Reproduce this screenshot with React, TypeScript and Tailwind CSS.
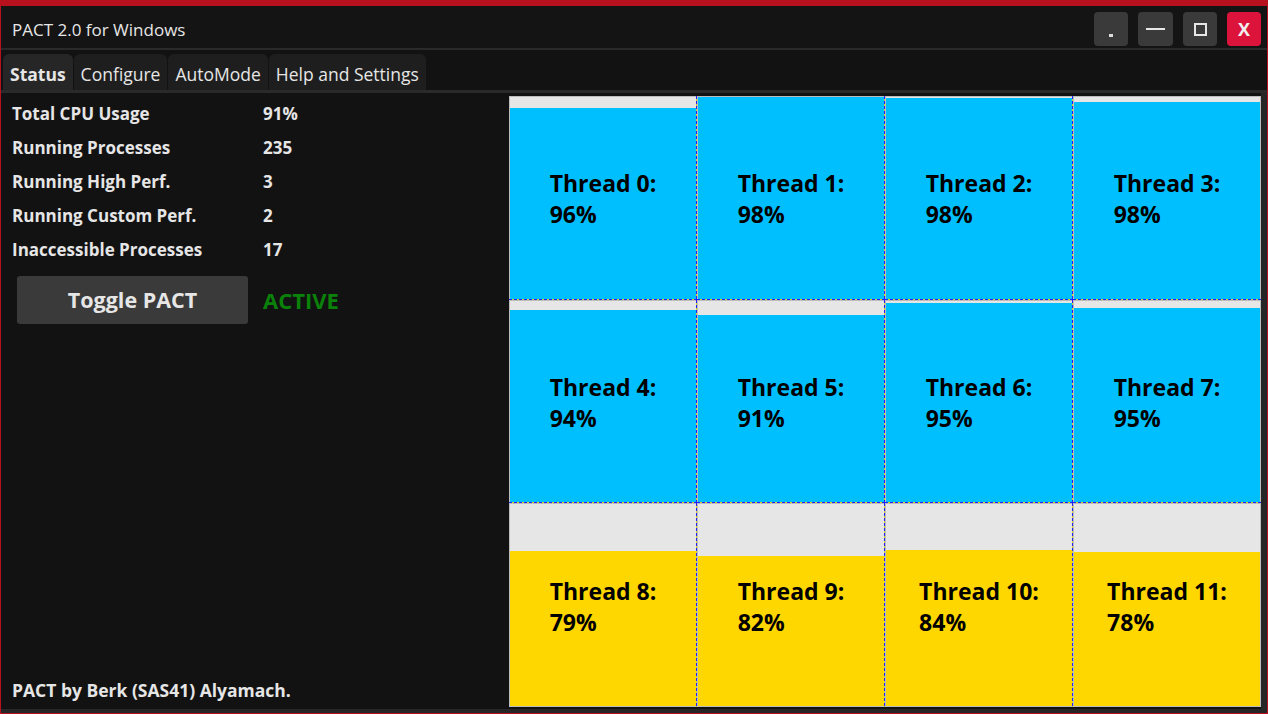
import React from "react";

const threads = [96, 98, 98, 98, 94, 91, 95, 95, 79, 82, 84, 78];
const grayTop = [11, 0, 1, 5, 9, 14, 2, 7, 47, 52, 46, 48];

const stats: [string, string][] = [
  ["Total CPU Usage", "91%"],
  ["Running Processes", "235"],
  ["Running High Perf.", "3"],
  ["Running Custom Perf.", "2"],
  ["Inaccessible Processes", "17"],
];

const font = { fontFamily: '"Open Sans", "Noto Sans", Roboto, sans-serif' };

export default function App() {
  return (
    <div
      className="w-[1268px] h-[714px] bg-[#b8111e] pt-[6px] px-[1px] pb-[1px] flex flex-col overflow-hidden"
      style={font}
    >
      {/* Title bar */}
      <div className="h-[42px] bg-[#141414] flex items-center justify-between pl-[11px] pr-[6px] shrink-0">
        <span className="text-[17px] text-[#e6e6e6] pt-[5px]">PACT 2.0 for Windows</span>
        <div className="flex items-center gap-[10px] pt-[4px]">
          <div className="w-[34px] h-[34px] rounded-[4px] bg-[#3a3a3a] flex items-end justify-center pb-[9px]">
            <span className="block w-[4px] h-[3px] bg-[#dcdcdc]" />
          </div>
          <div className="w-[35px] h-[34px] rounded-[4px] bg-[#3a3a3a] flex items-center justify-center">
            <span className="block w-[19px] h-[2px] bg-[#e6e6e6]" />
          </div>
          <div className="w-[34px] h-[34px] rounded-[4px] bg-[#3a3a3a] flex items-center justify-center">
            <span className="block w-[13px] h-[13px] border-2 border-[#e6e6e6]" />
          </div>
          <div className="w-[34px] h-[34px] rounded-[4px] bg-[#dc143c] flex items-center justify-center text-[18px] font-bold text-[#f0f0f0]">
            X
          </div>
        </div>
      </div>
      <div className="h-[2px] bg-[#2a2a2a] shrink-0" />
      {/* Tabs */}
      <div className="h-[40px] bg-[#121212] flex items-end pl-[2px] gap-[1px] shrink-0">
        {["Status", "Configure", "AutoMode", "Help and Settings"].map((t, i) => (
          <div
            key={t}
            className={
              "h-[36px] px-[7px] pt-[5px] flex items-center rounded-t-[6px] text-[17.5px] text-[#e6e6e6] " +
              (i === 0 ? "bg-[#262626] font-bold" : "bg-[#1e1e1e]")
            }
          >
            {t}
          </div>
        ))}
      </div>
      <div className="h-[3px] bg-[#2a2a2a] shrink-0" />
      {/* Content */}
      <div className="flex-1 flex bg-[#262626] pr-[6px] pb-[4px] min-h-0">
        {/* Left panel */}
        <div className="w-[508px] bg-[#121212] flex flex-col pl-[11px] pt-[4px] pb-[6px] shrink-0">
          {stats.map(([k, v]) => (
            <div key={k} className="h-[34px] flex items-center text-[17px] font-bold text-[#e6e6e6]">
              <span className="w-[251px]">{k}</span>
              <span>{v}</span>
            </div>
          ))}
          <div className="flex items-center mt-[9px]">
            <div className="ml-[5px] w-[231px] h-[48px] rounded-[3px] bg-[#3a3a3a] flex items-center justify-center text-[21.5px] font-bold text-[#e6e6e6]">
              Toggle PACT
            </div>
            <span className="ml-[15px] text-[22px] font-bold text-[#0a820a]">ACTIVE</span>
          </div>
          <div className="mt-auto text-[17.5px] font-bold text-[#e6e6e6]">PACT by Berk (SAS41) Alyamach.</div>
        </div>
        {/* Grid */}
        <div className="flex-1 bg-[#121212] pt-[3px] pb-[2px] flex">
          <div className="flex-1 grid grid-cols-4 grid-rows-3">
            {threads.map((p, i) => {
              const col = i % 4;
              const row = Math.floor(i / 4);
              const blue = row < 2;
              return (
                <div key={i} className="relative bg-[#e6e6e6] border border-[#bcbcbc]">
                  <div
                    className={"absolute left-0 right-0 bottom-0 " + (blue ? "bg-[#00bfff]" : "bg-[#ffd700]")}
                    style={{ top: `${grayTop[i]}px` }}
                  />
                  <div className="absolute inset-0 pt-[3px] flex items-center justify-center">
                    <div className="text-[23px] font-bold leading-[31px] text-black">
                      <div>Thread {i}:</div>
                      <div>{p}%</div>
                    </div>
                  </div>
                  {col < 3 && (
                    <div className="absolute top-[-1px] bottom-[-1px] right-[-1px] w-[1px] bg-[repeating-linear-gradient(to_bottom,#1f1fff_0_3px,#d8d820_3px_5px)]" />
                  )}
                  {row < 2 && (
                    <div className="absolute left-[-1px] right-[-1px] bottom-[-1px] h-[1px] bg-[repeating-linear-gradient(to_right,#1f1fff_0_3px,#d8d820_3px_5px)]" />
                  )}
                </div>
              );
            })}
          </div>
        </div>
      </div>
    </div>
  );
}
